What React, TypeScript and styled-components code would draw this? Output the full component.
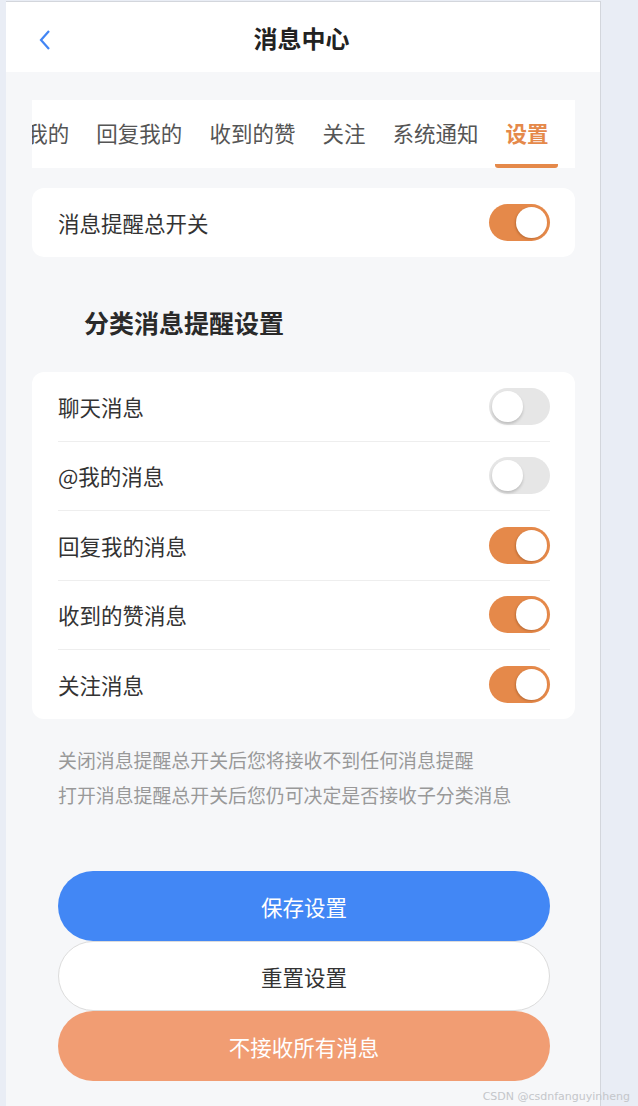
import React, { useLayoutEffect, useRef, useState } from "react";
import styled, { createGlobalStyle } from "styled-components";

const GlobalStyle = createGlobalStyle`
  html, body {
    margin: 0;
    padding: 0;
    background: #e9edf5;
    font-family: "Noto Sans CJK SC", "Noto Sans", sans-serif;
  }
  * {
    box-sizing: border-box;
  }
`;

const tabs = ["聊天", "@我的", "回复我的", "收到的赞", "关注", "系统通知", "设置"];

const initialItems = [
  { label: "聊天消息", on: false },
  { label: "@我的消息", on: false },
  { label: "回复我的消息", on: true },
  { label: "收到的赞消息", on: true },
  { label: "关注消息", on: true },
];

export default function App() {
  const [master, setMaster] = useState(true);
  const [items, setItems] = useState(initialItems);
  const stripRef = useRef<HTMLDivElement>(null);

  // the tab bar is scrolled so that the active "设置" tab shows at the right
  useLayoutEffect(() => {
    if (stripRef.current) {
      stripRef.current.scrollLeft = stripRef.current.scrollWidth;
    }
  }, []);

  const flip = (i: number) =>
    setItems(items.map((it, k) => (k === i ? { ...it, on: !it.on } : it)));

  return (
    <Page>
      <GlobalStyle />
      <Phone>
        <Header>
          <Back>
            <svg width="14" height="22" viewBox="0 0 14 22">
              <path d="M11 2 L3 11 L11 20" fill="none" stroke="#4285f4" strokeWidth="2.2" />
            </svg>
          </Back>
          <Title>消息中心</Title>
        </Header>
        <Content>
          <TabStrip ref={stripRef}>
            {tabs.map((t) => (
              <Tab key={t} active={t === "设置"}>
                {t}
              </Tab>
            ))}
          </TabStrip>
          <Card>
            <Row>
              <Label>消息提醒总开关</Label>
              <Switch on={master} onClick={() => setMaster(!master)}>
                <Thumb on={master} />
              </Switch>
            </Row>
          </Card>
          <SectionTitle>分类消息提醒设置</SectionTitle>
          <Card>
            {items.map((it, i) => (
              <Row key={it.label} divided={i < items.length - 1}>
                <Label>{it.label}</Label>
                <Switch on={it.on} onClick={() => flip(i)}>
                  <Thumb on={it.on} />
                </Switch>
              </Row>
            ))}
          </Card>
          <Hint>
            关闭消息提醒总开关后您将接收不到任何消息提醒
            <br />
            打开消息提醒总开关后您仍可决定是否接收子分类消息
          </Hint>
          <Buttons>
            <Button kind="primary">保存设置</Button>
            <Button kind="plain">重置设置</Button>
            <Button kind="warn">不接收所有消息</Button>
          </Buttons>
        </Content>
      </Phone>
      <Watermark>CSDN @csdnfanguyinheng</Watermark>
    </Page>
  );
}

const Page = styled.div`
  position: relative;
  min-height: 1106px;
  padding: 1px 0 0 6px;
`;

const Phone = styled.div`
  width: 595px;
  min-height: 1105px;
  background: #f6f7f9;
  border-top: 1px solid #d3d6dc;
  border-right: 1px solid #d3d6dc;
`;

const Header = styled.div`
  height: 70px;
  background: #fff;
  display: flex;
  align-items: center;
  justify-content: center;
  position: relative;
`;

const Back = styled.div`
  position: absolute;
  left: 32px;
  top: 27px;
  display: flex;
  cursor: pointer;
`;

const Title = styled.div`
  font-size: 24px;
  font-weight: 700;
  color: #222;
  margin-left: -3px;
`;

const Content = styled.div`
  padding: 28px 25px 0 26px;
`;

const TabStrip = styled.div`
  height: 68px;
  background: #fff;
  display: flex;
  gap: 7px;
  padding-right: 17px;
  overflow-x: auto;
  scrollbar-width: none;
  margin-bottom: 20px;
  &::-webkit-scrollbar {
    display: none;
  }
`;

const Tab = styled.div<{ active?: boolean }>`
  flex: none;
  padding: 0 10px;
  height: 68px;
  line-height: 66px;
  font-size: 21.5px;
  white-space: nowrap;
  color: ${(p) => (p.active ? "#e5894a" : "#555")};
  font-weight: ${(p) => (p.active ? 700 : 400)};
  border-bottom: 4px solid ${(p) => (p.active ? "#e5894a" : "transparent")};
  border-radius: 0 0 3px 3px;
`;

const Card = styled.div`
  background: #fff;
  border-radius: 12px;
  padding: 0 25px 0 26px;
`;

const Row = styled.div<{ divided?: boolean }>`
  height: 69.4px;
  display: flex;
  align-items: center;
  justify-content: space-between;
  border-bottom: 1px solid ${(p) => (p.divided ? "#eeeeee" : "transparent")};
`;

const Label = styled.div`
  font-size: 21.5px;
  color: #333;
`;

const Switch = styled.div<{ on: boolean }>`
  width: 61px;
  height: 37px;
  border-radius: 19px;
  background: ${(p) => (p.on ? "#e5894a" : "#e6e6e6")};
  padding: 3px;
  display: flex;
  justify-content: ${(p) => (p.on ? "flex-end" : "flex-start")};
  cursor: pointer;
`;

const Thumb = styled.div<{ on: boolean }>`
  width: 31px;
  height: 31px;
  border-radius: 50%;
  background: #fff;
  box-shadow: ${(p) =>
    p.on ? "-1px 1px 2px rgba(120, 60, 20, 0.35)" : "0 2px 3px rgba(0, 0, 0, 0.18)"};
`;

const SectionTitle = styled.h3`
  margin: 0 0 35px;
  padding: 50px 0 0 52px;
  line-height: 30px;
  font-size: 25px;
  font-weight: 700;
  color: #2a2a2a;
`;

const Hint = styled.div`
  margin-top: 23px;
  padding-left: 26px;
  font-size: 18.9px;
  line-height: 35px;
  color: #999;
`;

const Buttons = styled.div`
  margin: 59px 25px 0 26px;
  display: flex;
  flex-direction: column;
`;

const Button = styled.div<{ kind: "primary" | "plain" | "warn" }>`
  height: 70px;
  border-radius: 35px;
  display: flex;
  align-items: center;
  justify-content: center;
  font-size: 21.5px;
  cursor: pointer;
  background: ${(p) =>
    p.kind === "primary" ? "#4287f5" : p.kind === "warn" ? "#f19d73" : "#fff"};
  color: ${(p) => (p.kind === "plain" ? "#333" : "#fff")};
  border: 1px solid ${(p) => (p.kind === "plain" ? "#dcdcdc" : "transparent")};
`;

const Watermark = styled.div`
  position: absolute;
  right: 8px;
  bottom: 3px;
  font-family: "DejaVu Sans", sans-serif;
  font-size: 11px;
  color: #c4c6ca;
`;
